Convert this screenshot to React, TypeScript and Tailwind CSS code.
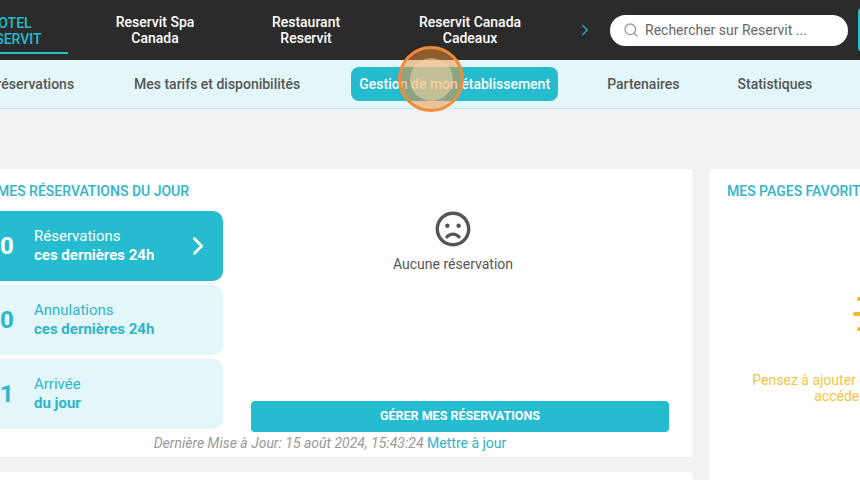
import React from 'react';
import { FaRegFrown } from 'react-icons/fa';
import { ChevronRight, Search } from 'lucide-react';

interface Tile {
  count: string;
  label: string;
  sub: string;
  active?: boolean;
}

const tiles: Tile[] = [
  { count: '0', label: 'Réservations', sub: 'ces dernières 24h', active: true },
  { count: '0', label: 'Annulations', sub: 'ces dernières 24h' },
  { count: '1', label: 'Arrivée', sub: 'du jour' },
];

function StatTile({ tile }: { tile: Tile }) {
  return (
    <div
      className={`flex h-[70px] w-[243px] items-center rounded-[10px] pl-[20px] ${
        tile.active ? 'bg-[#25bcd0] text-white' : 'bg-[#e3f6fa] text-[#2fb5ca]'
      }`}
    >
      <span className="w-[34px] text-[24px] font-bold leading-none">{tile.count}</span>
      <div className="flex-1 text-[15px] leading-[19px]">
        <div>{tile.label}</div>
        <div className="font-bold">{tile.sub}</div>
      </div>
      {tile.active && <ChevronRight size={30} strokeWidth={2} className="mr-[10px]" />}
    </div>
  );
}

export default function App() {
  return (
    <div className="relative h-[480px] w-[860px] overflow-hidden bg-[#f2f2f2] font-['Roboto',sans-serif]">
      {/* Top bar */}
      <header className="flex h-[60px] items-center bg-[#2b2b2b] text-[14px] font-medium leading-[16px] text-white">
        <div className="-ml-[48px] flex h-[48px] w-[116px] shrink-0 items-center justify-center border-b-2 border-[#25bcd0] pt-[4px] text-center text-[#25bcd0]">
          HOTEL
          <br />
          RESERVIT
        </div>
        <div className="ml-[32px] w-[110px] shrink-0 text-center">
          Reservit Spa
          <br />
          Canada
        </div>
        <div className="ml-[41px] w-[110px] shrink-0 text-center">
          Restaurant
          <br />
          Reservit
        </div>
        <div className="ml-[39px] w-[140px] shrink-0 text-center">
          Reservit Canada
          <br />
          Cadeaux
        </div>
        <ChevronRight size={18} strokeWidth={2} className="ml-[36px] shrink-0 text-[#25a9bd]" />
        <div className="ml-[16px] flex h-[31px] w-[238px] shrink-0 items-center rounded-full bg-white pl-[13px] font-normal text-[#666]">
          <Search size={16} strokeWidth={2} className="text-[#999]" />
          <span className="ml-[6px]">Rechercher sur Reservit ...</span>
        </div>
        <div className="ml-[10px] h-[44px] w-[20px] shrink-0 rounded-[4px] bg-[#25bcd0]" />
      </header>

      {/* Sub nav */}
      <nav className="flex h-[49px] items-center border-b border-[#c5e8ef] bg-[#e3f6fa] text-[14px] font-medium text-[#555]">
        <span className="-ml-[34px] w-[110px] shrink-0 whitespace-nowrap">Mes réservations</span>
        <span className="ml-[58px] shrink-0 whitespace-nowrap">Mes tarifs et disponibilités</span>
        <span className="ml-[51px] flex h-[34px] w-[207px] shrink-0 items-center justify-center whitespace-nowrap rounded-[8px] bg-[#25bcd0] text-white">
          Gestion de mon établissement
        </span>
        <span className="ml-[49px] shrink-0 whitespace-nowrap">Partenaires</span>
        <span className="ml-[58px] shrink-0 whitespace-nowrap">Statistiques</span>
      </nav>

      {/* Content */}
      <main className="flex gap-[16px] pt-[60px]">
        <div className="-ml-[20px] flex w-[713px] shrink-0 flex-col gap-[15px]">
          <section className="h-[288px] rounded-[4px] bg-white pl-[17px] pt-[14px] shadow-[0_0_2px_rgba(0,0,0,0.05)]">
            <h2 className="text-[14px] font-medium leading-[16px] text-[#2fb5ca]">MES RÉSERVATIONS DU JOUR</h2>
            <div className="flex pt-[12px]">
              <div className="-ml-[17px] flex flex-col gap-[4px]">
                {tiles.map((tile) => (
                  <StatTile key={tile.label + tile.count} tile={tile} />
                ))}
              </div>
              <div className="ml-[28px] flex h-[221px] w-[418px] flex-col items-center">
                <FaRegFrown size={36} className="-ml-[14px] text-[#555]" />
                <div className="-ml-[14px] mt-[9px] text-[14px] leading-[16px] text-[#555]">Aucune réservation</div>
                <button className="mt-auto h-[31px] w-full rounded-[4px] bg-[#25bcd0] text-[12.5px] font-bold text-white">
                  GÉRER MES RÉSERVATIONS
                </button>
              </div>
            </div>
            <p className="mt-[3px] -ml-[17px] w-[700px] text-center text-[14px] leading-[16px] text-[#999]">
              <span className="italic">Dernière Mise à Jour: 15 août 2024, 15:43:24</span>{' '}
              <span className="text-[#2fb5ca]">Mettre à jour</span>
            </p>
          </section>
          <section className="h-[100px] rounded-[4px] bg-white" />
        </div>

        <section className="h-[400px] w-[364px] shrink-0 rounded-[4px] bg-white px-[18px] pt-[14px] shadow-[0_0_2px_rgba(0,0,0,0.05)]">
          <h2 className="whitespace-nowrap text-[14px] font-medium leading-[16px] text-[#2fb5ca]">MES PAGES FAVORITES</h2>
          <div className="mt-[93px] flex justify-center">
            <svg width="76" height="44" viewBox="0 0 76 44" fill="none" stroke="#f5b921" strokeWidth="4" strokeLinecap="round">
              <path d="M6 7l4 -1M2 22h7M6 37l4 1M70 7l-4 -1M74 22h-7M70 37l-4 1" />
            </svg>
          </div>
          <p className="mt-[36px] text-center text-[14px] leading-[16px] text-[#f5c542]">
            Pensez à ajouter des pages en favoris pour y
            <br />
            accéder plus rapidement
          </p>
        </section>
      </main>

      {/* Click marker over the page */}
      <div className="absolute left-[398px] top-[46px] flex h-[66px] w-[66px] items-center justify-center rounded-full border-[3px] border-[#f28c38] bg-[#f28c38]/50">
        <div className="h-[43px] w-[43px] rounded-full bg-[#f5d9a8]/50" />
      </div>
    </div>
  );
}
